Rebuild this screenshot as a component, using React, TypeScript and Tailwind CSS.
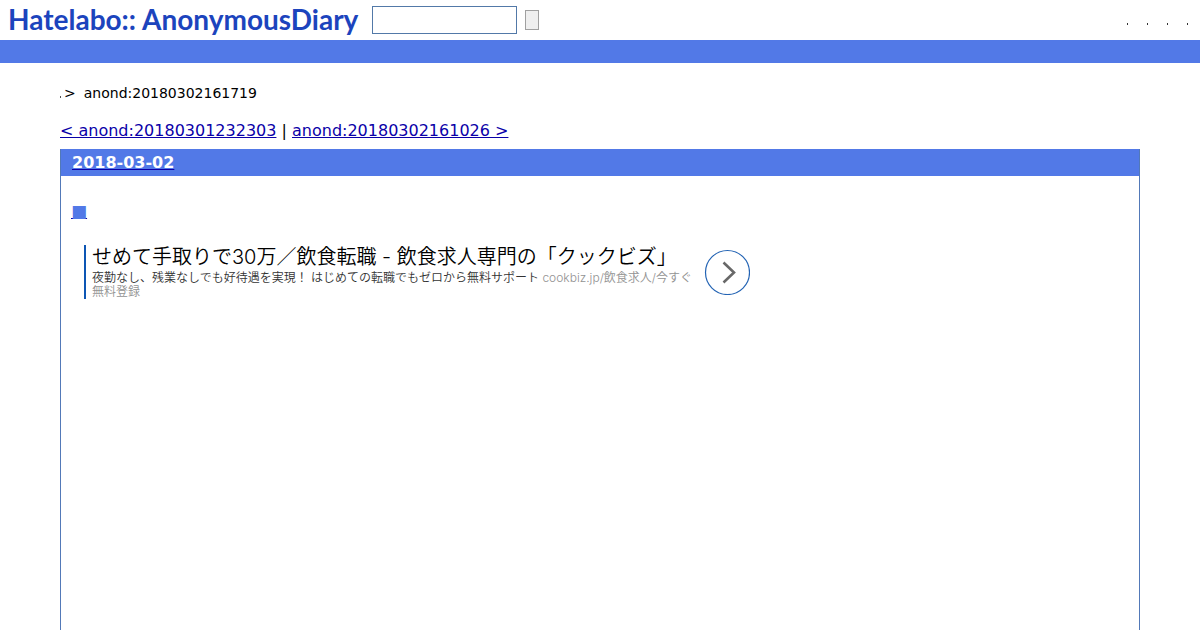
const menuItems = ["ようこそ", "ログイン", "登録", "ヘルプ"];

function Header() {
  return (
    <header>
      <div className="flex h-10 items-center justify-between pl-2 pr-3">
        <div className="flex items-center">
          <a
            href="#top"
            className="flex w-[364px] gap-1.5 pb-0.5 whitespace-nowrap font-['Lato',sans-serif] text-[28px] leading-9 font-bold text-[#1c44bd]"
          >
            <span>Hatelabo::</span>
            <span>AnonymousDiary</span>
          </a>
          <form className="flex items-center gap-2" onSubmit={(e) => e.preventDefault()}>
            <input
              type="text"
              aria-label="Search"
              className="h-7 w-[145px] border border-[#5279a8] bg-white px-1 text-sm outline-none"
            />
            <button
              type="submit"
              aria-label="Submit search"
              className="h-5 w-3.5 border border-[#a0a0a0] bg-[#efefef]"
            />
          </form>
        </div>
        <nav className="flex gap-[19px] pt-2">
          {menuItems.map((item) => (
            <a key={item} href="#menu" aria-label={item} className="block h-0.5 w-px bg-[#333333]" />
          ))}
        </nav>
      </div>
      <div className="h-[23px] bg-[#5279e7]" />
    </header>
  );
}

function Advertisement() {
  return (
    <a
      href="#ad"
      className="ml-[13px] flex w-[668px] items-center font-['Inter','Noto_Sans_CJK_JP',sans-serif]"
    >
      <span className="block w-[620px] border-l-2 border-[#0d56b4] pl-1.5">
        <span className="block pb-0.5 text-xl leading-6 font-[350] whitespace-nowrap text-black">
          せめて手取りで30万／飲食転職 - 飲食求人専門の「クックビズ」
        </span>
        <span className="block pr-1.5 text-xs leading-3.5 font-[350] text-[#333333]">
          夜勤なし、残業なしでも好待遇を実現！ はじめての転職でもゼロから無料サポート{" "}
          <span className="text-[#929292]">cookbiz.jp/飲食求人/今すぐ無料登録</span>
        </span>
      </span>
      <svg viewBox="0 0 46 46" className="h-[46px] w-[46px] shrink-0" fill="none" aria-hidden="true">
        <circle cx="23.5" cy="23.5" r="22" stroke="#2464b4" strokeWidth="1.2" />
        <path d="M19.5 13.5 L30 23.5 L19.5 33.5" stroke="#686868" strokeWidth="2.6" />
      </svg>
    </a>
  );
}

export default function App() {
  return (
    <div className="flex min-h-screen flex-col bg-white font-['DejaVu_Sans',sans-serif] text-black">
      <Header />
      <main className="mx-[60px] flex flex-1 flex-col">
        <nav className="flex items-center pt-5 text-sm leading-5">
          <a href="#home" aria-label="Home" className="mt-2 h-0.5 w-px bg-[#555555]" />
          <span className="ml-[3px]">&gt;</span>
          <span className="ml-2">anond:20180302161719</span>
        </nav>
        <div className="pt-4 pb-[6px] text-base leading-6">
          <a href="#prev" className="text-[#0a00a8] underline">&lt; anond:20180301232303</a>
          {" | "}
          <a href="#next" className="text-[#0a00a8] underline">anond:20180302161026 &gt;</a>
        </div>
        <article className="flex-1 border-x border-[#5279b8]">
          <h2 className="h-[27px] bg-[#5279e7] px-[11px] text-base leading-[27px] font-bold">
            <a href="#date" className="text-[#0a00a8] underline">
              <span className="text-white">2018-03-02</span>
            </a>
          </h2>
          <div className="px-2.5 pt-[18px]">
            <h3 className="pb-[17px] text-[17px] leading-[34px]">
              <a href="#entry" className="text-[#0a00a8] underline">
                <span className="text-[#5279e7]">■</span>
              </a>
            </h3>
            <Advertisement />
          </div>
        </article>
      </main>
    </div>
  );
}
